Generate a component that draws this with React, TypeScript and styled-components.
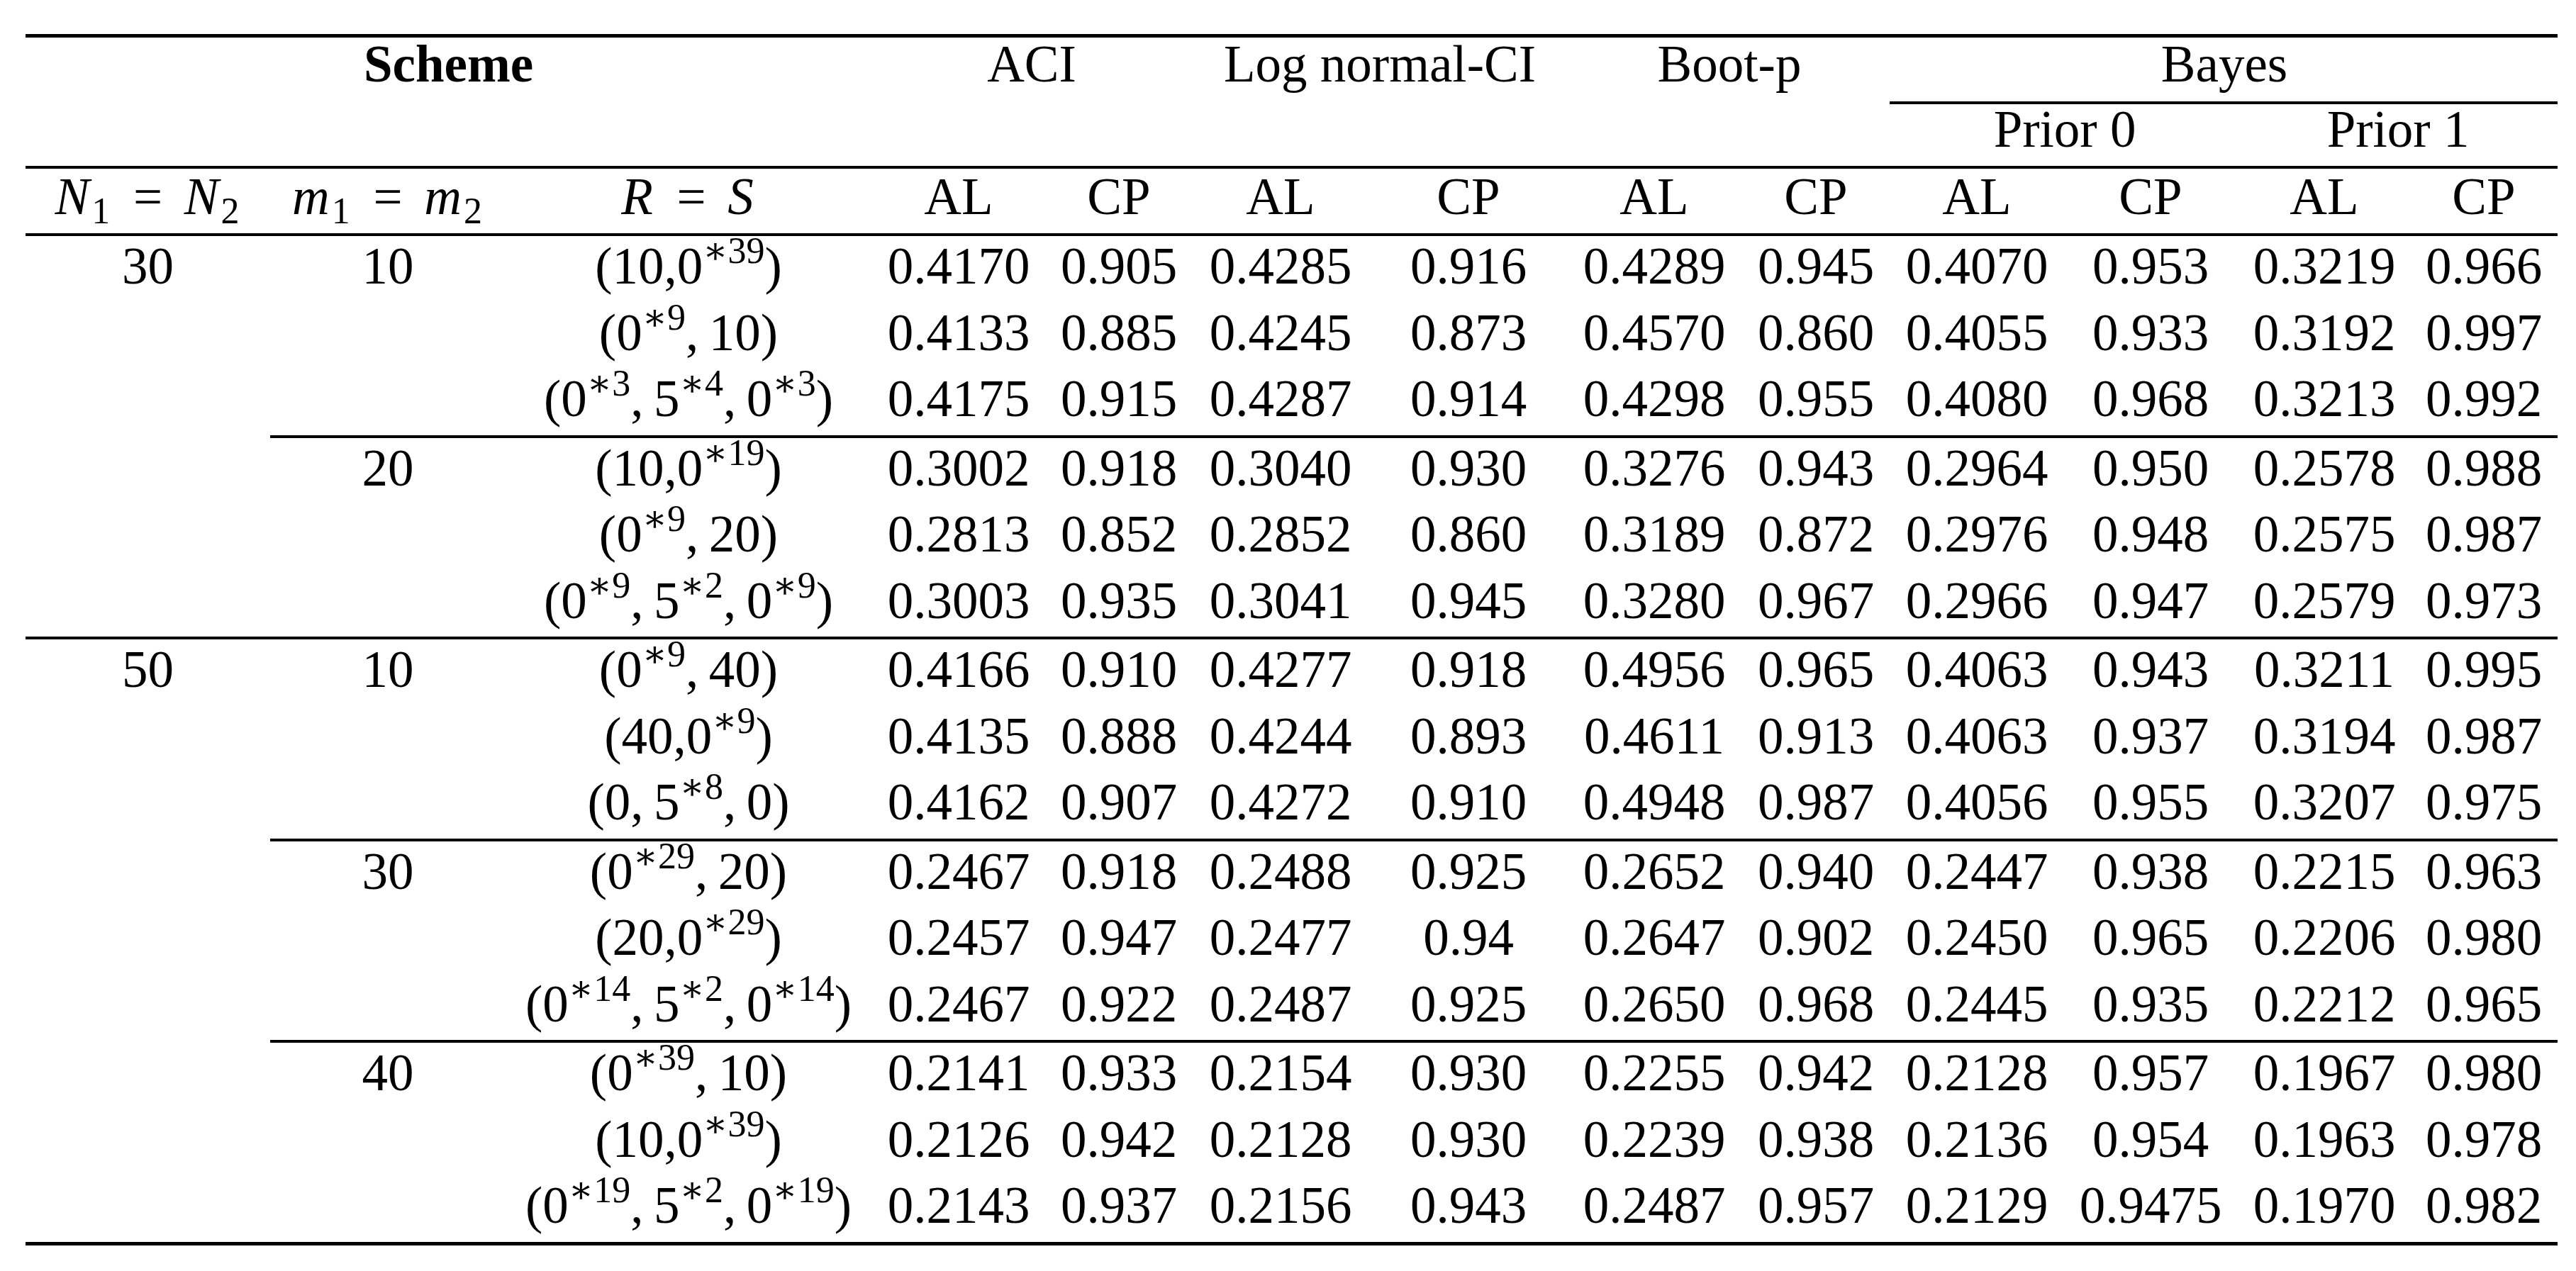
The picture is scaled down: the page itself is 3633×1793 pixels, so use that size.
import * as React from 'react';
import styled, { createGlobalStyle } from 'styled-components';

// column widths follow the LaTeX tabular: content + tabcolsep, extra width from spanning heads
const COLS =
  '345px 332px 516px 246px 206px 250px 280px 244px 212px 242px 248px 242px 208px';

type Sub = { m: string; rows: [string, string][] };
type Group = { n: string; subs: Sub[] };

const groups: Group[] = [
  {
    n: '30',
    subs: [
      {
        m: '10',
        rows: [
          ['(10,0*39)', '0.4170 0.905 0.4285 0.916 0.4289 0.945 0.4070 0.953 0.3219 0.966'],
          ['(0*9, 10)', '0.4133 0.885 0.4245 0.873 0.4570 0.860 0.4055 0.933 0.3192 0.997'],
          ['(0*3, 5*4, 0*3)', '0.4175 0.915 0.4287 0.914 0.4298 0.955 0.4080 0.968 0.3213 0.992'],
        ],
      },
      {
        m: '20',
        rows: [
          ['(10,0*19)', '0.3002 0.918 0.3040 0.930 0.3276 0.943 0.2964 0.950 0.2578 0.988'],
          ['(0*9, 20)', '0.2813 0.852 0.2852 0.860 0.3189 0.872 0.2976 0.948 0.2575 0.987'],
          ['(0*9, 5*2, 0*9)', '0.3003 0.935 0.3041 0.945 0.3280 0.967 0.2966 0.947 0.2579 0.973'],
        ],
      },
    ],
  },
  {
    n: '50',
    subs: [
      {
        m: '10',
        rows: [
          ['(0*9, 40)', '0.4166 0.910 0.4277 0.918 0.4956 0.965 0.4063 0.943 0.3211 0.995'],
          ['(40,0*9)', '0.4135 0.888 0.4244 0.893 0.4611 0.913 0.4063 0.937 0.3194 0.987'],
          ['(0, 5*8, 0)', '0.4162 0.907 0.4272 0.910 0.4948 0.987 0.4056 0.955 0.3207 0.975'],
        ],
      },
      {
        m: '30',
        rows: [
          ['(0*29, 20)', '0.2467 0.918 0.2488 0.925 0.2652 0.940 0.2447 0.938 0.2215 0.963'],
          ['(20,0*29)', '0.2457 0.947 0.2477 0.94 0.2647 0.902 0.2450 0.965 0.2206 0.980'],
          ['(0*14, 5*2, 0*14)', '0.2467 0.922 0.2487 0.925 0.2650 0.968 0.2445 0.935 0.2212 0.965'],
        ],
      },
      {
        m: '40',
        rows: [
          ['(0*39, 10)', '0.2141 0.933 0.2154 0.930 0.2255 0.942 0.2128 0.957 0.1967 0.980'],
          ['(10,0*39)', '0.2126 0.942 0.2128 0.930 0.2239 0.938 0.2136 0.954 0.1963 0.978'],
          ['(0*19, 5*2, 0*19)', '0.2143 0.937 0.2156 0.943 0.2487 0.957 0.2129 0.9475 0.1970 0.982'],
        ],
      },
    ],
  },
];

// "(0*9, 10)" -> 0 with a superscript ∗9, math comma followed by a thin space
function scheme(text: string) {
  return text.split(/(\*\d+)/).map((part, i) =>
    part.startsWith('*') ? (
      <Sup key={i}>{'\u2217' + part.slice(1)}</Sup>
    ) : (
      <React.Fragment key={i}>{part.replace(/ /g, '\u2009')}</React.Fragment>
    ),
  );
}

function App() {
  return (
    <>
      <GlobalStyle />
      <Page>
        <Rule $weight={5} />
        <Head>
          <Title $col="1 / 4" $lh={75} $bold>
            Scheme
          </Title>
          <Title $col="4 / 6" $lh={75}>
            ACI
          </Title>
          <Title $col="6 / 8" $lh={75}>
            Log normal-CI
          </Title>
          <Title $col="8 / 10" $lh={75}>
            Boot-p
          </Title>
          <Title $col="10 / 14" $lh={75}>
            Bayes
          </Title>
          <SpanRule $col="10 / 14" />
          <Title $col="10 / 12" $row={3} $lh={71}>
            Prior 0
          </Title>
          <Title $col="12 / 14" $row={3} $lh={71}>
            Prior 1
          </Title>
        </Head>
        <Rule $weight={4} />
        <Row $height={91} $lh={79}>
          <Cell>
            <Var>N</Var>
            <Low>1</Low>
            <Eq>=</Eq>
            <Var>N</Var>
            <Low>2</Low>
          </Cell>
          <Cell>
            <Var>m</Var>
            <Low>1</Low>
            <Eq>=</Eq>
            <Var>m</Var>
            <Low>2</Low>
          </Cell>
          <Cell>
            <Var>R</Var>
            <Eq>=</Eq>
            <Var>S</Var>
          </Cell>
          {['AL', 'CP', 'AL', 'CP', 'AL', 'CP', 'AL', 'CP', 'AL', 'CP'].map((h, i) => (
            <Cell key={i}>{h}</Cell>
          ))}
        </Row>
        <Rule $weight={4} />
        {groups.map((group, gi) => (
          <React.Fragment key={group.n}>
            {group.subs.map((sub, si) => (
              <React.Fragment key={sub.m}>
                {si > 0 && <Rule $weight={4} $indent={345} />}
                {sub.rows.map(([r, values], ri) => (
                  <Row key={ri} $height={93.5} $lh={85}>
                    <Cell>{si === 0 && ri === 0 ? group.n : ''}</Cell>
                    <Cell>{ri === 0 ? sub.m : ''}</Cell>
                    <Cell>{scheme(r)}</Cell>
                    {values.split(' ').map((v, vi) => (
                      <Cell key={vi}>{v}</Cell>
                    ))}
                  </Row>
                ))}
              </React.Fragment>
            ))}
            {gi < groups.length - 1 && <Rule $weight={4} />}
          </React.Fragment>
        ))}
        <Rule $weight={5} />
      </Page>
    </>
  );
}

const GlobalStyle = createGlobalStyle`
  html, body {
    margin: 0;
    padding: 0;
    background: #ffffff;
  }

  body {
    font-family: 'Liberation Serif', 'DejaVu Serif', serif;
    color: #000000;
  }
`;

const Page = styled.div`
  width: 3571px;
  padding: 48px 0 0 36px;
`;

const Rule = styled.div<{ $weight: number; $indent?: number }>`
  height: ${p => p.$weight}px;
  margin-left: ${p => p.$indent ?? 0}px;
  background: #000000;
`;

const Head = styled.div`
  display: grid;
  grid-template-columns: ${COLS};
  grid-template-rows: 90px 4px 87px;
  font-size: 73px;
`;

const Title = styled.div<{ $col: string; $row?: number; $lh: number; $bold?: boolean }>`
  grid-column: ${p => p.$col};
  grid-row: ${p => p.$row ?? 1};
  line-height: ${p => p.$lh}px;
  font-weight: ${p => (p.$bold ? 700 : 400)};
  text-align: center;
  white-space: nowrap;
`;

const SpanRule = styled.div<{ $col: string }>`
  grid-column: ${p => p.$col};
  grid-row: 2;
  margin-left: -2px;
  background: #000000;
`;

const Row = styled.div<{ $height: number; $lh: number }>`
  display: grid;
  grid-template-columns: ${COLS};
  height: ${p => p.$height}px;
  font-size: 73px;
  line-height: ${p => p.$lh}px;
`;

const Cell = styled.div`
  text-align: center;
  white-space: nowrap;
`;

const Sup = styled.span`
  font-size: 52px;
  line-height: 0;
  vertical-align: 29px;
`;

const Low = styled.span`
  font-size: 52px;
  line-height: 0;
  vertical-align: -13px;
  padding-right: 2px;
`;

const Var = styled.i`
  font-style: italic;
  padding-right: 3px;
`;

const Eq = styled.span`
  margin: 0 0.42em;
`;

export default App;
